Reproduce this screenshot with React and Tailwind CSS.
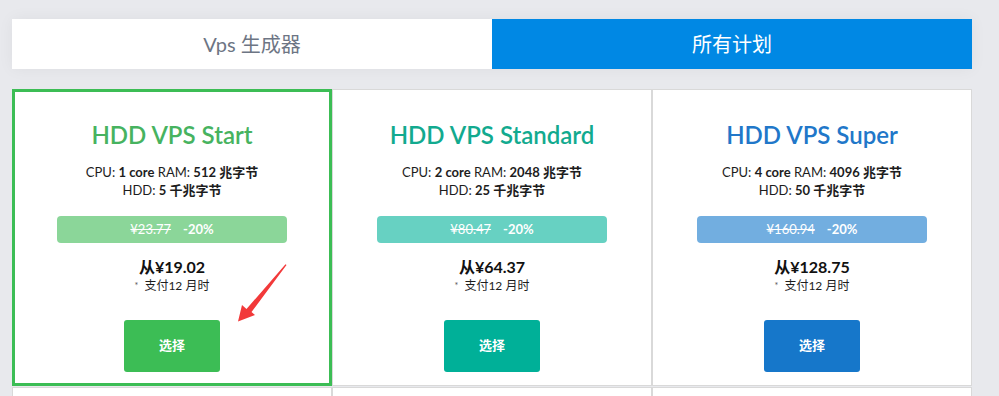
import React from "react";

const plans = [
  {
    name: "HDD VPS Start",
    cpu: "1",
    ram: "512",
    hdd: "5",
    old: "¥23.77",
    price: "从¥19.02",
    title: "text-[#47b35f]",
    bar: "bg-[#8bd699]",
    btn: "bg-[#3cbd55]",
    selected: true,
  },
  {
    name: "HDD VPS Standard",
    cpu: "2",
    ram: "2048",
    hdd: "25",
    old: "¥80.47",
    price: "从¥64.37",
    title: "text-[#12aa8f]",
    bar: "bg-[#67d1c2]",
    btn: "bg-[#00b098]",
  },
  {
    name: "HDD VPS Super",
    cpu: "4",
    ram: "4096",
    hdd: "50",
    old: "¥160.94",
    price: "从¥128.75",
    title: "text-[#2177c9]",
    bar: "bg-[#72aee0]",
    btn: "bg-[#1677ca]",
  },
];

const font = { fontFamily: 'Lato, "Noto Sans CJK SC", sans-serif' };

function Card({ p }) {
  return (
    <div
      className={
        "flex flex-col items-center bg-white border pt-[29px] pb-[13px] " +
        (p.selected
          ? "border-[#3cbd55] ring-2 ring-inset ring-[#3cbd55] relative z-10"
          : "border-[#d9d9d9]")
      }
    >
      <div className={"text-[24px] leading-[32px] font-semibold " + p.title}>{p.name}</div>
      <div className="mt-[12px] text-[13px] leading-[18px] text-[#1d1d1d] text-center">
        <div>
          CPU: <b className="font-bold">{p.cpu} core</b> RAM: <b className="font-bold">{p.ram} 兆字节</b>
        </div>
        <div>
          HDD: <b className="font-bold">{p.hdd} 千兆字节</b>
        </div>
      </div>
      <div
        className={
          "mt-[17px] w-[230px] h-[27px] rounded-[4px] flex items-center justify-center gap-[12px] text-white text-[13px] " +
          p.bar
        }
      >
        <span className="line-through">{p.old}</span>
        <span className="font-bold">-20%</span>
      </div>
      <div className="mt-[13px] text-[16px] leading-[22px] font-bold text-[#111]">{p.price}</div>
      <div className="text-[12px] leading-[16px] text-[#1d1d1d]">
        <span className="text-[9px] align-top mr-[6px] text-[#555]">*</span>支付12 月时
      </div>
      <button
        className={
          "mt-[26px] w-[96px] h-[52px] rounded-[3px] text-white text-[13px] font-bold flex items-center justify-center " +
          p.btn
        }
      >
        选择
      </button>
    </div>
  );
}

export default function App() {
  return (
    <div className="w-[999px] h-[396px] overflow-hidden bg-[#e8e9ed] relative" style={font}>
      <div className="pt-[19px] pl-[12px] w-[972px]">
        <div className="flex h-[50px] shadow-[0_0_16px_rgba(0,0,0,0.05)]">
          <div className="flex-1 bg-white flex items-center justify-center text-[20px] text-[#6d7584]">
            Vps 生成器
          </div>
          <div className="flex-1 bg-[#0088e4] flex items-center justify-center text-[20px] text-white">
            所有计划
          </div>
        </div>
        <div className="mt-[20px] grid grid-cols-3">
          {plans.map((p) => (
            <Card key={p.name} p={p} />
          ))}
          <div className="h-[120px] bg-white border border-[#d9d9d9] mt-[1px]" />
          <div className="h-[120px] bg-white border border-[#d9d9d9] mt-[1px]" />
          <div className="h-[120px] bg-white border border-[#d9d9d9] mt-[1px]" />
        </div>
      </div>
      <svg
        className="absolute left-[234px] top-[262px] z-20"
        width="58"
        height="64"
        viewBox="0 0 58 64"
      >
        <polygon
          points="52.5,3 17.5,50 21,53 4,59.5 8,43 12.5,47 51.5,2.3"
          fill="#f2393a"
        />
      </svg>
    </div>
  );
}
